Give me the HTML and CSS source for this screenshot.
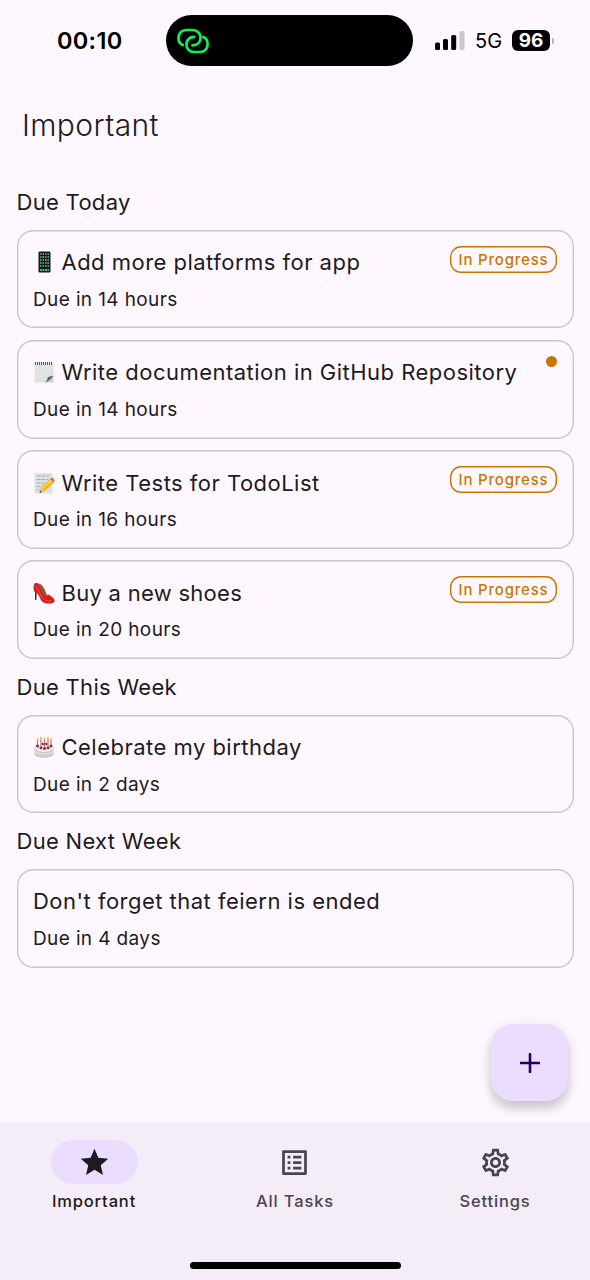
FILE: index.html
```html
<!DOCTYPE html>
<html lang="en">
<head>
<meta charset="utf-8">
<title>Important</title>
<link rel="stylesheet" href="styles.css">
</head>
<body>
<div class="app">
  <header class="status">
    <div class="clock"><span>00:10</span></div>
    <div class="island">
      <svg class="link-icon" viewBox="0 0 32 26" fill="none" stroke="#0cf25d" stroke-width="2.700" stroke-linecap="round">
        <path d="M5.800 17C2.800 15.800 1.400 12.800 1.400 9.800 1.400 5.400 4.800 2 9.200 2h6.600c4.400 0 7.800 3.200 7.800 7.800 0 4.600-3.400 7.600-8.200 7.600"/>
        <path d="M17.200 8.900c-4.800 0-7.800 3-7.800 7.500 0 4.400 3.200 7.600 7.400 7.600h6.200c4.400 0 7.600-3.200 7.600-7.800 0-3.200-1.600-6-4.200-7.200"/>
      </svg>
    </div>
    <div class="signals">
      <svg class="bars" viewBox="0 0 30 19"><rect y="11.500" width="5" height="7.500" rx="1.500"/><rect x="8" y="8" width="5" height="11" rx="1.500"/><rect x="16.200" y="4" width="5" height="15" rx="1.500"/><rect x="24.500" y="0" width="5" height="19" rx="1.500" fill="#cdc6cf"/></svg>
      <span class="network">5G</span>
      <span class="battery">96</span><i class="battery-tip"></i>
    </div>
  </header>

  <h1 class="page-title">Important</h1>

  <main class="list">
    <h2 class="section">Due Today</h2>
    <div class="cards">
      <article class="card">
        <div class="card-text">
          <h3 class="task"><svg class="emoji" viewBox="0 0 22 22"><rect x="5.500" y="0.500" width="12" height="21" rx="1.300" fill="#111917"/><path d="M7 3h9M7 6h9M7 9h9M7 12h9M7 15h9" stroke="#54b99a" stroke-width="1.500" stroke-dasharray="1.500 1"/><path d="M9.500 6h1.500M12 9h1.500M14.500 12h1.500" stroke="#e65a79" stroke-width="1.500"/><path d="M7 19h9" stroke="#35b889" stroke-width="2" stroke-dasharray="2 .5"/></svg><span>Add more platforms for app</span></h3>
          <p class="due">Due in 14 hours</p>
        </div>
        <span class="badge">In Progress</span>
      </article>
      <article class="card">
        <div class="card-text">
          <h3 class="task"><svg class="emoji" viewBox="0 0 22 22"><path d="M1.500 1.500h19v13L14 21.500H1.500z" fill="#dfe3e4"/><path d="M20.500 14.500 14 21.500h6.500z" fill="#cfd3d6"/><path d="M20.500 14.500c-2.500 1-5 1-6 2 .4 2-1.500 4-3 5 4-1 7-3.500 9-7z" fill="#63676a"/><path d="M2 2.500h18" stroke="#555b60" stroke-width="3" stroke-dasharray="1 1"/></svg><span>Write documentation in GitHub Repository</span></h3>
          <p class="due">Due in 14 hours</p>
        </div>
        <span class="dot"></span>
      </article>
      <article class="card">
        <div class="card-text">
          <h3 class="task"><svg class="emoji" viewBox="0 0 22 22"><path d="M1.500 1h18v20.500h-18z" fill="#dce1e2"/><path d="M3.500 4h13M3.500 7.500h12M3.500 11h8M3.500 14.500h5M3.500 18h3" stroke="#a3adb4" stroke-width="1" stroke-dasharray="4 1"/><path d="m6.500 20.500 1.500-5L17 7l3.800 3.800-9 8.200z" fill="#f4b51f"/><path d="m9.500 16.500 9-8" stroke="#ffdf63" stroke-width="1.500"/><path d="m17 7 1.500-1.300c1-.8 3.700 2 3 3.200l-1 1.600z" fill="#df735f"/><path d="m8 15.500 3.800 3.500-5.300 1.800z" fill="#ebc58a"/><path d="m6.500 20.700.7-2.200 1.700 1.500z" fill="#333"/></svg><span>Write Tests for TodoList</span></h3>
          <p class="due">Due in 16 hours</p>
        </div>
        <span class="badge">In Progress</span>
      </article>
      <article class="card">
        <div class="card-text">
          <h3 class="task"><svg class="emoji" viewBox="0 0 22 22"><path d="M2 8v10h1.300l.4-7z" fill="#751515"/><path d="M2.500 1.500C7 .5 10.500 4 12 8.500l2 4.500-4 2z" fill="#8f5839"/><path d="M1.500 1.500C.2 4 .3 7 1.200 9.500c3.500 1 5 4.500 6.300 7.700 1.500 3.400 4.700 4.300 8.500 4.300 4 0 6-1.300 5.500-3.200-.4-2.300-3-4-6-5.900-1.500 1.200-3.800 1.300-5.200.1C8 9.500 6.500 3 3.500.8z" fill="#d51d20"/><path d="M2.800 4c2.800 2.800 4 8 6.500 12 2 2.500 6 3 9 2.800" stroke="#f4443d" stroke-width="1.200" fill="none"/></svg><span class="tight">Buy a new shoes</span></h3>
          <p class="due">Due in 20 hours</p>
        </div>
        <span class="badge">In Progress</span>
      </article>
    </div>
    <h2 class="section">Due This Week</h2>
    <div class="cards">
      <article class="card">
        <div class="card-text">
          <h3 class="task"><svg class="emoji" viewBox="0 0 22 22"><path d="M1.500 11v7c0 5 19 5 19 0v-7z" fill="#cfc9c6"/><ellipse cx="11" cy="11.500" rx="9.500" ry="4.500" fill="#f4efec"/><path d="M2 15.500c2 3.300 16 3.300 18 0" stroke="#f1ece9" fill="none"/><path d="M4.500 4v6M8 3v7M11.500 4v8M15 3v7M18 4v6" stroke="#b0706f" stroke-width="1.100"/><path d="M4.500 2v2.500M8 .8v2.500M11.500 1.500V4M15 .8v2.500M18 2v2.500" stroke="#f5b544" stroke-width="1.500"/><g fill="#8d2640"><circle cx="4.500" cy="10" r="1.500"/><circle cx="8" cy="11.800" r="1.500"/><circle cx="11.500" cy="12.500" r="1.500"/><circle cx="15" cy="11.800" r="1.500"/><circle cx="18" cy="10" r="1.500"/><circle cx="9.800" cy="8" r="1.200"/><circle cx="13.300" cy="8" r="1.200"/></g></svg><span>Celebrate my birthday</span></h3>
          <p class="due">Due in 2 days</p>
        </div>
      </article>
    </div>
    <h2 class="section">Due Next Week</h2>
    <div class="cards">
      <article class="card">
        <div class="card-text">
          <h3 class="task"><span>Don't forget that feiern is ended</span></h3>
          <p class="due">Due in 4 days</p>
        </div>
      </article>
    </div>
  </main>

  <nav class="nav">
    <div class="nav-item active">
      <span class="pill"><svg class="icon" viewBox="0 0 24 24"><path d="M12 17.270 18.180 21l-1.640-7.030L22 9.240l-7.190-.61L12 2 9.190 8.630 2 9.240l5.460 4.730L5.820 21z"/></svg></span>
      <span class="nav-label">Important</span>
    </div>
    <div class="nav-item">
      <span class="pill"><svg class="icon" viewBox="0 0 24 24"><path d="M19 5v14H5V5h14m1.100-2H3.900c-.5 0-.9.4-.9.9v16.200c0 .4.4.9.9.9h16.200c.4 0 .9-.5.9-.9V3.900c0-.5-.5-.9-.9-.9zM11 7h6v2h-6V7zm0 4h6v2h-6v-2zm0 4h6v2h-6v-2zM7 7h2v2H7V7zm0 4h2v2H7v-2zm0 4h2v2H7v-2z"/></svg></span>
      <span class="nav-label">All Tasks</span>
    </div>
    <div class="nav-item">
      <span class="pill"><svg class="icon" viewBox="0 0 24 24"><path d="M19.430 12.980c.04-.32.07-.64.07-.98 0-.34-.03-.66-.07-.98l2.110-1.650c.19-.15.24-.42.12-.64l-2-3.460c-.09-.16-.26-.25-.44-.25-.06 0-.12.010-.17.030l-2.490 1c-.52-.4-1.080-.73-1.690-.98l-.38-2.650C14.460 2.180 14.250 2 14 2h-4c-.25 0-.46.18-.49.42l-.38 2.650c-.61.25-1.170.59-1.690.98l-2.490-1c-.06-.02-.12-.03-.18-.03-.17 0-.34.09-.43.25l-2 3.460c-.13.22-.07.49.12.64l2.110 1.650c-.04.32-.07.65-.07.98 0 .33.03.66.07.98l-2.110 1.650c-.19.15-.24.42-.12.64l2 3.460c.09.16.26.25.44.25.06 0 .12-.01.17-.03l2.490-1c.52.4 1.080.73 1.690.98l.38 2.650c.03.24.24.42.49.42h4c.25 0 .46-.18.49-.42l.38-2.650c.61-.25 1.170-.59 1.690-.98l2.490 1c.06.02.12.03.18.03.17 0 .34-.09.43-.25l2-3.460c.12-.22.07-.49-.12-.64l-2.110-1.650zm-1.980-1.710c.04.31.05.52.05.73 0 .21-.02.43-.05.73l-.14 1.130.89.7 1.080.84-.7 1.210-1.270-.51-1.040-.42-.9.68c-.43.32-.84.56-1.250.73l-1.060.43-.16 1.130-.2 1.350h-1.400l-.19-1.350-.16-1.130-1.060-.43c-.43-.18-.83-.41-1.230-.71l-.91-.7-1.060.43-1.270.51-.7-1.210 1.080-.84.89-.7-.14-1.130c-.03-.31-.05-.54-.05-.74s.02-.43.05-.73l.14-1.130-.89-.7-1.080-.84.7-1.210 1.270.51 1.040.42.9-.68c.43-.32.84-.56 1.250-.73l1.060-.43.16-1.130.2-1.350h1.390l.19 1.350.16 1.130 1.060.43c.43.18.83.41 1.230.71l.91.7 1.060-.43 1.270-.51.7 1.210-1.070.85-.89.7.14 1.130zM12 8c-2.210 0-4 1.790-4 4s1.790 4 4 4 4-1.790 4-4-1.790-4-4-4zm0 6c-1.100 0-2-.9-2-2s.9-2 2-2 2 .9 2 2-.9 2-2 2z"/></svg></span>
      <span class="nav-label">Settings</span>
    </div>
    <div class="home-bar"></div>
  </nav>
  <button class="fab" aria-label="Add task"><svg class="plus" viewBox="0 0 20 20"><path d="M10 1v18M1 10h18" stroke="#23005c" stroke-width="2.600" stroke-linecap="round"/></svg></button>
</div>
</body>
</html>
```
FILE: styles.css
```css
* { box-sizing: border-box; }
body { margin: 0; background: #fef7ff; color: #1d1b20; font-family: Inter, sans-serif; }
h1, h2, h3, p { margin: 0; font-weight: 400; white-space: nowrap; }
svg { display: block; flex: none; }
.app { position: relative; display: flex; flex-direction: column; width: 590px; height: 1280px; overflow: hidden; }

.status { display: grid; grid-template-columns: 166px 247px 1fr; height: 81px; align-items: center; color: #000; }
.clock { padding-left: 57px; font-size: 23.500px; font-weight: 600; letter-spacing: .3px; }
.island { display: flex; align-items: center; height: 51px; padding-left: 11px; border-radius: 26px; background: #000; }
.link-icon { width: 32px; height: 26px; }
.signals { display: flex; align-items: center; padding-left: 22px; }
.bars { width: 30px; height: 19px; margin: 0 10px 1px 0; }
.network { width: 37px; font-size: 20px; font-weight: 400; letter-spacing: 0; }
.battery { width: 38px; height: 21px; margin-bottom: 1px; border-radius: 6px; background: #000; color: #fff; font-size: 19px; line-height: 21px; font-weight: 700; text-align: center; }
.battery-tip { width: 2px; height: 6px; margin-left: 2px; border-radius: 0 3px 3px 0; background: #b9b2bc; }

.page-title { padding-left: 22px; height: 93.100px; font-size: 30px; line-height: 88px; font-weight: 350; letter-spacing: .4px; }
.list { flex: 1; padding: 0 16.500px; }
.section { height: 55.500px; font-size: 22px; line-height: 56px; letter-spacing: .3px; }
.cards { display: grid; gap: 11.600px; }
.card { display: flex; justify-content: space-between; height: 98.700px; padding: 16px 16.500px; box-shadow: inset 0 0 0 1.400px #cac4d0; border-radius: 16.500px; }
.task { display: flex; align-items: center; gap: 6.500px; height: 33px; font-size: 22px; font-weight: 430; letter-spacing: .48px; }
.tight { letter-spacing: .28px; }
.emoji { width: 22px; height: 22px; }
.due { height: 38px; font-size: 19px; line-height: 41px; font-weight: 380; letter-spacing: .38px; }
.badge { width: 107px; height: 27px; box-shadow: inset 0 0 0 1.400px #c77700; border-radius: 11px; color: #c77700; font-size: 15px; font-weight: 450; line-height: 27px; letter-spacing: .8px; text-align: center; white-space: nowrap; }
.dot { width: 11px; height: 11px; border-radius: 50%; background: #c77700; }

.nav { position: relative; display: grid; grid-template-columns: repeat(3, 1fr); align-content: start; height: 157px; padding: 17px 0 0; background: #f4ecf7; color: #49454f; }
.nav-item { display: flex; flex-direction: column; align-items: center; width: 188px; height: 80px; }
.nav-item:nth-child(2) { width: auto; }
.nav-item:nth-child(3) { justify-self: end; width: 190px; }
.pill { display: grid; place-items: center; width: 87px; height: 44px; border-radius: 22px; }
.active .pill { background: #eaddff; }
.active { color: #1d1b20; }
.icon { width: 33px; height: 33px; fill: currentColor; }
.nav-label { height: 34px; font-size: 16.500px; font-weight: 450; line-height: 34px; letter-spacing: .85px; white-space: nowrap; }
.home-bar { grid-column: 1 / -1; justify-self: center; width: 211px; height: 7px; margin-top: 42px; border-radius: 4px; background: #000; }
.fab { position: absolute; left: 491px; top: 1024px; display: grid; place-items: center; width: 77px; height: 77px; padding: 0; border: 0; border-radius: 22px; background: #eaddff; box-shadow: 0 8px 10px rgba(0,0,0,.16), 0 2px 16px rgba(0,0,0,.08); }
.plus { width: 20px; height: 20px; }
```
